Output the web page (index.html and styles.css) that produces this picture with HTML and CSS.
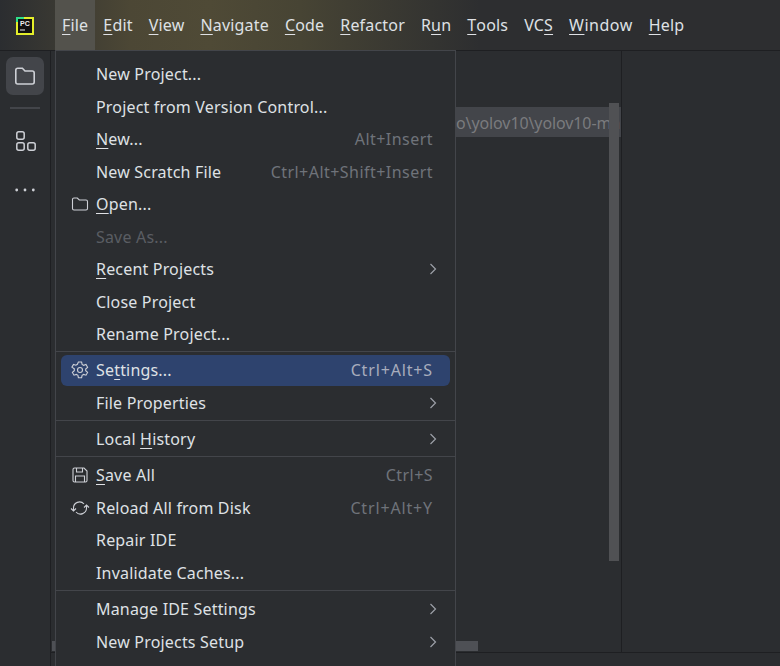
FILE: index.html
```html
<!DOCTYPE html>
<html lang="en">
<head>
<meta charset="utf-8">
<title>PyCharm File menu</title>
<link rel="stylesheet" href="styles.css">
</head>
<body>
<div class="app">
  <header class="topbar">
    <div class="logo-cell">
      <svg class="logo" width="18" height="18" viewBox="0 0 18 18"><rect x="0" y="0" width="18" height="18" fill="#e4ee2a"/><rect x="0" y="0" width="8" height="5" fill="#2fe08a"/><rect x="2" y="2" width="14" height="14" fill="#111"/><rect x="4" y="12.5" width="5" height="1" fill="#eee"/><text x="4" y="8.6" class="logo-text">PC</text></svg>
    </div>
    <nav class="menubar">
      <span class="mitem active"><u>F</u>ile</span>
      <span class="mitem"><u>E</u>dit</span>
      <span class="mitem"><u>V</u>iew</span>
      <span class="mitem"><u>N</u>avigate</span>
      <span class="mitem"><u>C</u>ode</span>
      <span class="mitem"><u>R</u>efactor</span>
      <span class="mitem">R<u>u</u>n</span>
      <span class="mitem"><u>T</u>ools</span>
      <span class="mitem">VC<u>S</u></span>
      <span class="mitem window"><u>W</u>indow</span>
      <span class="mitem"><u>H</u>elp</span>
    </nav>
  </header>
  <div class="body">
    <aside class="rail">
      <button class="rail-btn selected" aria-label="Project">
        <svg width="24" height="24" viewBox="0 0 24 24" fill="none" stroke="#ced0d6" stroke-width="1.6"><path d="M2.800 6.200a2 2 0 0 1 2-2h4.600l2.600 2.800h7.200a2 2 0 0 1 2 2v9a2 2 0 0 1-2 2H4.800a2 2 0 0 1-2-2z"/></svg>
      </button>
      <div class="rail-sep"></div>
      <button class="rail-btn" aria-label="Structure">
        <svg width="24" height="24" viewBox="0 0 24 24" fill="none" stroke="#ced0d6" stroke-width="1.5"><rect x="3.800" y="2.800" width="7.400" height="7.400" rx="2"/><rect x="3.800" y="13.800" width="7.400" height="7.400" rx="2"/><rect x="14.800" y="13.800" width="7.400" height="7.400" rx="2"/></svg>
      </button>
      <button class="rail-btn more" aria-label="More">
        <svg width="24" height="24" viewBox="0 0 24 24" fill="#ced0d6"><circle cx="3.700" cy="12" r="1.400"/><circle cx="12" cy="12" r="1.400"/><circle cx="20.300" cy="12" r="1.400"/></svg>
      </button>
    </aside>
    <main class="editor">
      <div class="path-line"><span class="path-text">o\yolov10\yolov10-ma</span></div>
      <div class="vscroll"></div>
      <div class="hscroll-left"></div>
      <div class="hscroll"></div>
      <div class="right-panel"></div>
      <div class="status"></div>
    </main>
  </div>

  <div class="menu">
    <div class="row"><span class="label">New Project...</span></div>
    <div class="row"><span class="label">Project from Version Control...</span></div>
    <div class="row"><span class="label"><u>N</u>ew...</span><span class="key">Alt+Insert</span></div>
    <div class="row"><span class="label">New Scratch File</span><span class="key">Ctrl+Alt+Shift+Insert</span></div>
    <div class="row">
      <svg class="ico" width="18" height="18" viewBox="0 0 18 18" fill="none" stroke="#ced0d6" stroke-width="1.1"><path d="M1.500 4.500a1.500 1.500 0 0 1 1.500-1.500h3.300l2 2h6.700a1.500 1.500 0 0 1 1.500 1.500v7a1.500 1.500 0 0 1-1.500 1.500H3a1.500 1.500 0 0 1-1.500-1.500z"/></svg>
      <span class="label"><u>O</u>pen...</span>
    </div>
    <div class="row"><span class="label disabled">Save As...</span></div>
    <div class="row"><span class="label"><u>R</u>ecent Projects</span><svg class="chev" width="8" height="12" viewBox="0 0 8 12" fill="none" stroke="#9da0a8" stroke-width="1.2"><path d="M1.500 1l5 5-5 5"/></svg></div>
    <div class="row"><span class="label">Close Project</span></div>
    <div class="row"><span class="label">Rename Project...</span></div>
    <div class="sep"></div>
    <div class="row current">
      <svg class="ico" width="18" height="18" viewBox="0 0 18 18" fill="none" stroke="#ced0d6" stroke-width="1.1"><path d="M7.400 1h3.200l.5 2.400 1.500.9 2.400-.8 1.600 2.800-1.900 1.700v1.700l1.900 1.700-1.600 2.800-2.400-.8-1.500.9-.5 2.400H7.400l-.5-2.400-1.500-.9-2.400.8-1.600-2.800 1.900-1.700V7.900L.9 6.200l1.600-2.800 2.400.8 1.500-.9z"/><circle cx="9" cy="9" r="2.500"/></svg>
      <span class="label">Se<u>t</u>tings...</span><span class="key spaced">Ctrl+Alt+S</span>
    </div>
    <div class="row"><span class="label">File Properties</span><svg class="chev" width="8" height="12" viewBox="0 0 8 12" fill="none" stroke="#9da0a8" stroke-width="1.2"><path d="M1.500 1l5 5-5 5"/></svg></div>
    <div class="sep"></div>
    <div class="row"><span class="label">Local <u>H</u>istory</span><svg class="chev" width="8" height="12" viewBox="0 0 8 12" fill="none" stroke="#9da0a8" stroke-width="1.2"><path d="M1.500 1l5 5-5 5"/></svg></div>
    <div class="sep"></div>
    <div class="row">
      <svg class="ico" width="18" height="18" viewBox="0 0 18 18" fill="none" stroke="#ced0d6" stroke-width="1.1"><path d="M2 3.500A1.500 1.500 0 0 1 3.500 2h9.500L16 5v9.500a1.500 1.500 0 0 1-1.500 1.500h-11A1.500 1.500 0 0 1 2 14.500z"/><path d="M5.500 2v4h6V2M4.500 16v-6h9v6"/></svg>
      <span class="label"><u>S</u>ave All</span><span class="key">Ctrl+S</span>
    </div>
    <div class="row">
      <svg class="ico wide" width="20" height="18" viewBox="0 0 20 18" fill="none" stroke="#ced0d6" stroke-width="1.1"><path d="M1 9.500l2.500 2.500L6 9.500M3.500 12V9a6 6 0 0 1 10.500-4M19 8.500L16.500 6 14 8.500M16.500 6v3a6 6 0 0 1-10.500 4"/></svg>
      <span class="label">Reload All from Disk</span><span class="key spaced">Ctrl+Alt+Y</span>
    </div>
    <div class="row"><span class="label">Repair IDE</span></div>
    <div class="row"><span class="label">Invalidate Caches...</span></div>
    <div class="sep"></div>
    <div class="row"><span class="label">Manage IDE Settings</span><svg class="chev" width="8" height="12" viewBox="0 0 8 12" fill="none" stroke="#9da0a8" stroke-width="1.2"><path d="M1.500 1l5 5-5 5"/></svg></div>
    <div class="row"><span class="label">New Projects Setup</span><svg class="chev" width="8" height="12" viewBox="0 0 8 12" fill="none" stroke="#9da0a8" stroke-width="1.2"><path d="M1.500 1l5 5-5 5"/></svg></div>
  </div>
</div>
</body>
</html>
```

FILE: styles.css
```css
* { box-sizing: border-box; }
html, body { margin: 0; height: 100%; overflow: hidden; background: #2b2d30; }
body { font-family: "Noto Sans", "Open Sans", sans-serif; font-size: 16px; letter-spacing: .18px; color: #dfe1e5; }
u { text-decoration: underline; text-decoration-thickness: 1px; text-underline-offset: 3px; }

.app { position: relative; width: 780px; height: 666px; display: flex; flex-direction: column; overflow: hidden; }

.topbar { flex: none; height: 51px; display: flex; border-bottom: 1px solid #1e1f22;
  background: linear-gradient(90deg, #2b2d30 0, #4c4735 130px, #4f4a36 210px, #474434 300px, #2d2e30 480px); }
.logo-cell { width: 55px; display: flex; align-items: center; justify-content: center; padding: 1px 5px 0 0; }
.logo-text { font: bold 7px "Liberation Sans", sans-serif; fill: #eee; letter-spacing: 0; }
.menubar { display: flex; align-items: center; }
.mitem { height: 50px; display: flex; align-items: center; padding: 0 8px; color: #dfe1e5; white-space: pre; }
.mitem.active { background: #53524c; padding: 0 7px; }
.mitem.window { letter-spacing: .5px; }

.body { flex: 1; display: flex; min-height: 0; }
.rail { flex: none; width: 51px; border-right: 1px solid #1e1f22; padding: 6px 6px 0 6px; display: flex; flex-direction: column; align-items: flex-start; }
.rail-btn { flex: none; width: 38px; height: 38px; border: 0; padding: 0; background: none; border-radius: 7px; display: flex; align-items: center; justify-content: center; }
.rail-btn.selected { background: #43454a; }
.rail-btn.more { margin-top: 11px; }
.rail-sep { flex: none; width: 30px; height: 2px; margin: 12px 0 13px 4px; background: #43454a; }

.editor { position: relative; flex: 1; min-width: 0; }
.path-line { position: absolute; left: 405px; top: 56px; width: 165px; height: 30px; padding-top: 1px; background: #43454a; overflow: hidden; display: flex; align-items: center; color: #7a7b7e; white-space: nowrap; letter-spacing: -.1px; }
.vscroll { position: absolute; left: 558px; top: 52px; width: 10px; height: 458px; background: #505154; }
.hscroll-left { position: absolute; left: 1px; top: 590px; width: 3px; height: 10px; background: #4e5055; }
.hscroll { position: absolute; left: 405px; top: 590px; width: 22px; height: 10px; background: #4e5055; }
.right-panel { position: absolute; left: 570px; top: 0; right: 0; bottom: 14px; border-left: 1px solid #1e1f22; background: #2b2d30; }
.status { position: absolute; left: 0; right: 0; bottom: 0; height: 14px; border-top: 1px solid #1e1f22; background: #2b2d30; }

.menu { position: absolute; left: 55px; top: 50px; width: 401px; height: 640px; padding: 6.750px 0 0; background: #2b2d30; border: 1px solid #43454a; display: flex; flex-direction: column; }
.row { position: relative; flex: none; height: 32.500px; display: flex; align-items: center; padding: 0 22px 0 40px; white-space: nowrap; }
.row.current::before { content: ""; position: absolute; left: 5px; right: 5px; top: 1px; bottom: 1px; background: #2e436e; border-radius: 6px; }
.row > * { position: relative; }
.label { flex: 1; color: #dfe1e5; }
.label.disabled { color: #5a5d63; }
.key { color: #6f737a; letter-spacing: .46px; }
.key.spaced { letter-spacing: .85px; }
.row.current .key { color: #a8adbd; }
.row > .ico { position: absolute; left: 15px; top: 7px; }
.row > .ico.wide { left: 14px; }
.chev { flex: none; margin-right: -4px; }
.sep { flex: none; height: 1px; margin: 1px 0 1.750px; background: #43454a; }
```
